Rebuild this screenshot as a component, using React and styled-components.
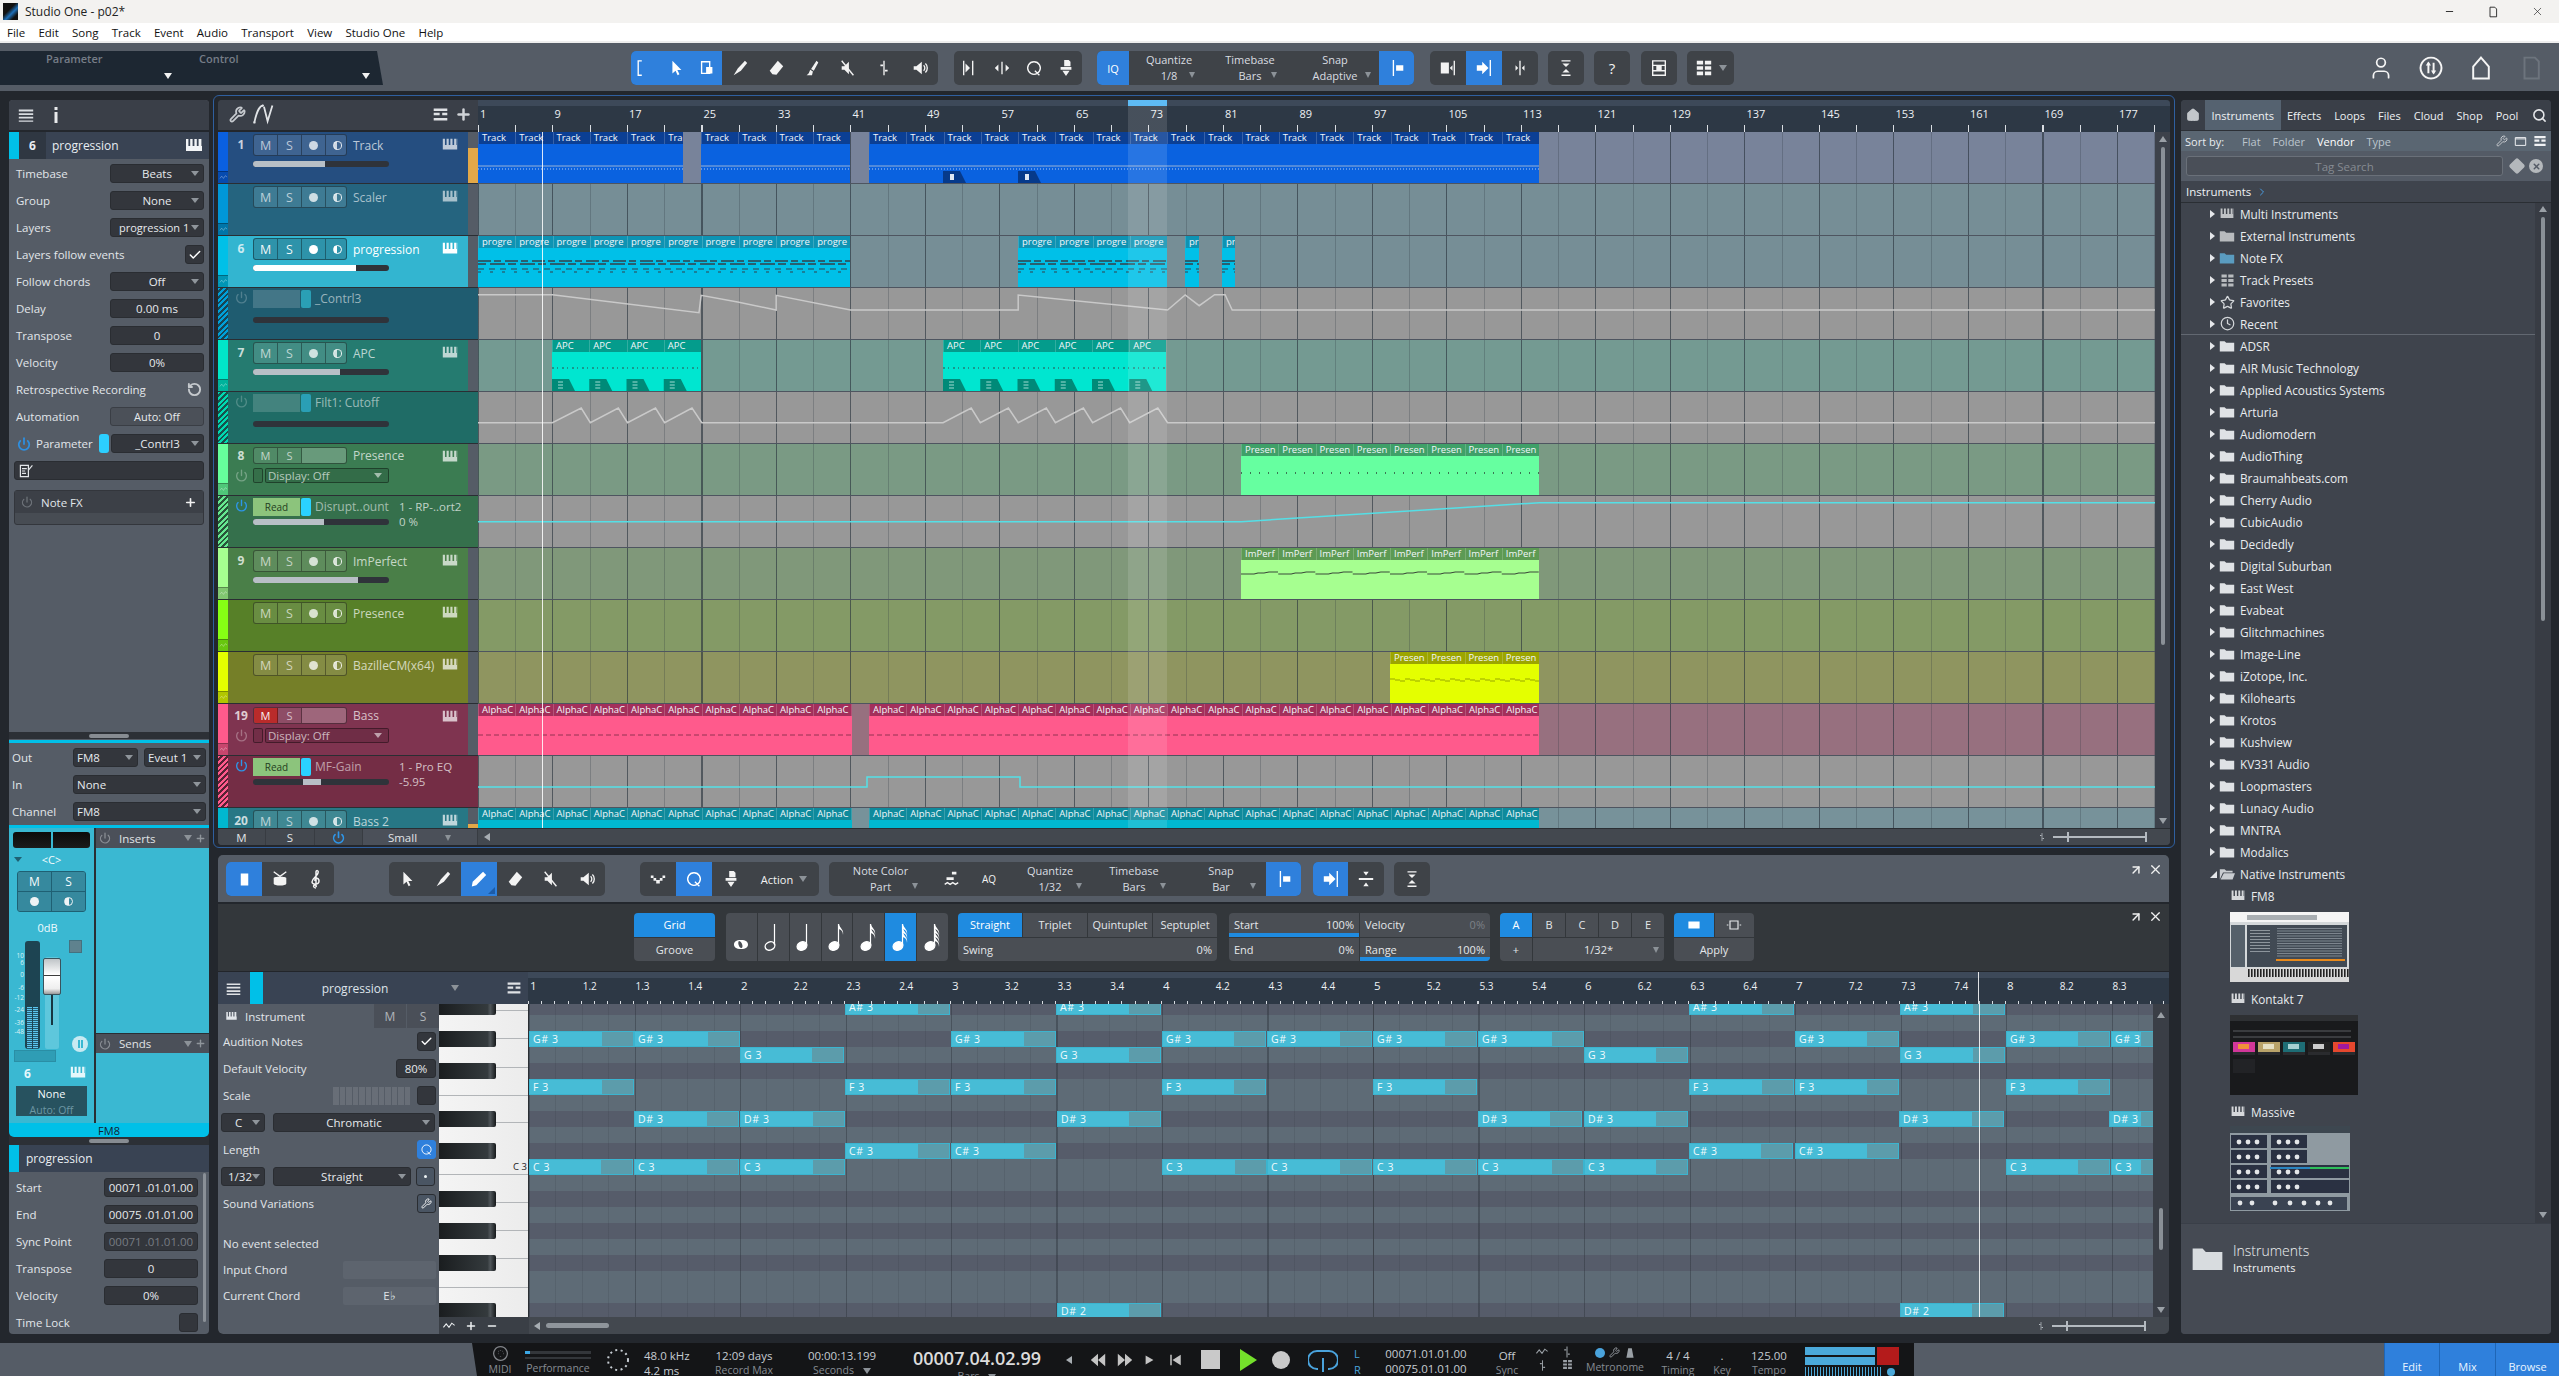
import React from 'react';
import styled, { createGlobalStyle } from 'styled-components';
import { Power, Search, House, Wrench, Check, Plus, X, Star, Clock, Minus, ChevronRight, ArrowUpRight, RotateCcw, User } from 'lucide-react';

const Global = createGlobalStyle`
  html, body { margin: 0; padding: 0; background: #23272d; overflow: hidden; }
  #root { width: 2559px; height: 1376px; }
  * { box-sizing: border-box; }
  body { font-family: "Open Sans", "Liberation Sans", sans-serif; font-size: 11.5px; color: #dfe3e8; }
`;

/* ---------- icons ---------- */
const P = {
  arrow: { d: 'M6 2v14l3.5-3 2.3 5 2-1-2.3-4.8H16z' },
  pencil: { d: 'M14.5 2l3.5 3.5L7 17l-5 1.2L3 13z' },
  knife: { d: 'M15.5 2l2.5 2.5-7 8.5-8 5 4.5-7.5z' },
  eraser: { d: 'M12 2l6 6-7.5 9.5-4.5-.5L3 13z' },
  paint: { d: 'M15 2l2 2-5 9-3-2z M8 12l3 2-1 4H4c2-1 3-3 4-6z' },
  mute: { d: 'M3 8h3l5-5v14l-5-5H3z', l: 'M3 2l13 16' },
  split: { d: 'M6 6h3v2H6z M11 12h3v2h-3z', l: 'M10 2v16' },
  speaker: { d: 'M3 8h3l6-5v14l-6-5H3z', l: 'M14 7a4 4 0 0 1 0 6 M16 5a7 7 0 0 1 0 10' },
  bracket: { l: 'M12 2H8v16h4' },
  range: { d: 'M9 9h7v7H9z', l: 'M4 3h9v13H4z' },
  stretch: { d: 'M5 5l5 5-5 5z', l: 'M13 2v16 M3 2v16' },
  lr: { d: 'M2 10l4-4v8z M18 10l-4-4v8z', l: 'M10 3v14' },
  q: { l: 'M10 3a7 7 0 1 0 .01 0 M11 13l5 5' },
  press: { d: 'M8 1h5l2 2v5H8z M4 9h12v3H4z M6 13h8l-4 6z' },
  snapflag: { d: 'M9 7h8v6H9z', l: 'M6 1v18' },
  filmL: { d: 'M2 4h9v12H2z M15 7l-3 3 3 3z', l: 'M17 2v16' },
  arrowR: { d: 'M2 7h6V3l7 7-7 7v-4H2z', l: 'M17 1v18' },
  splitV: { d: 'M8 10l-3-3v6z M12 10l3-3v6z', l: 'M10 2v16' },
  expand: { d: 'M6 5h8l-4 4z M6 15h8l-4-4z', l: 'M5 2h10 M5 18h10' },
  film: { d: 'M7 7h6v6H7z', l: 'M3 2h14v16H3z M3 7h14 M3 13h14' },
  windowI: { l: 'M2 4h16v12H2z M2 6h16' },
  grid: { d: 'M2 2h7v4H2z M11 2h7v4h-7z M2 8h7v4H2z M11 8h7v4h-7z M2 14h7v4H2z M11 14h7v4h-7z' },
  list: { d: 'M2 4h16v2H2z M2 8h16v2H2z M2 12h16v2H2z M2 16h16v1.5H2z' },
  rows: { d: 'M2 3h16v3H2z M2 8h7v3H2z M12 8h6v3h-6z M2 14h16v3H2z' },
  keys: { d: 'M2 3h2.4v7h1.8V3h2.4v7h1.8V3h2.4v7h1.8V3H17v7h.6V3H18v12H2z' },
  curve: { l: 'M2 17C4 7 7 3 9 3M10 4l3 12 4-13', d: 'M1 17a1 1 0 1 0 2 0a1 1 0 1 0-2 0 M8 3a1 1 0 1 0 2 0a1 1 0 1 0-2 0' },
  drum: { d: 'M3 9c0-2 14-2 14 0v6c0 3-14 3-14 0z', l: 'M3 2l7 5 7-5' },
  treble: { l: 'M10 19c-3 0-3-3-1-3s1 2 1 2V3c0-2 3-2 2 1-1 4-6 5-6 9 0 3 7 3 7-1s-5-3-4 0' },
  ruler: { d: 'M5 2h10v16H5z' },
  skew: { d: 'M2 6h3v3H2z M8 11h4v4H8z M15 6h3v3h-3z M5 9h3v3H5z M12 9h3v3h-3z' },
  bars2: { d: 'M11 2h5v3h-5z M5 8h8v3H5z', l: 'M3 16l3-2 3 2 3-2 3 2 3-2' },
  sizeE: { d: 'M2 5h16v10H2z', l: '' },
  size2: { l: 'M5 5h10v10H5z M3 10H1 M17 10h2' },
  divide: { d: 'M7 2h6l-3 4z M2 9h16v2H2z M7 18h6l-3-4z' },
  circArrows: { l: 'M10 2a8 8 0 1 0 .01 0 M8 6v8 M12 14V6', d: 'M8 5l-2 3h4z M12 15l-2-3h4z' },
  homeO: { l: 'M10 2l6 7v9H4V9z' },
  doc: { l: 'M5 2h8l3 3v13H5z' },
  edit: { l: 'M3 3h10v14H3z M5 7h6 M5 10h4 M5 13h5 M13 9l5-6' },
  folder: { d: 'M1 4h6l2 2h10v11H1z' },
  folderO: { d: 'M1 4h6l2 2h8v2H5l-4 9z M6 9h14l-3 8H2z' },
  midi: { l: 'M10 2a8 8 0 1 0 .01 0 M7 10h.5 M13 10h.5 M10 6v.5 M10 13v.5 M7.5 7.5h.5 M12.5 7.5h.5' },
  metro: { d: 'M7 2h6l3 16H4z' },
  wave: { l: 'M2 12l4-5 4 5 4-6 4 3' },
};
const Svg = styled.svg`
  display: block; flex: none; color: ${p => p.$c || 'currentColor'};
`;
const Ico = ({ n, s = 18, c }) => {
  const i = P[n];
  return (
    <Svg viewBox="0 0 20 20" width={s} height={s} $c={c}>
      {i.d && <path d={i.d} fill="currentColor" />}
      {i.l && <path d={i.l} fill="none" stroke="currentColor" strokeWidth="1.5" />}
    </Svg>
  );
};
const NoteGlyph = ({ kind }) => {
  const filled = kind > 1;
  const flags = Math.max(0, kind - 2);
  if (kind === 0) return <Svg viewBox="0 0 20 34" width="20" height="34"><path fillRule="evenodd" d="M10 20c5 0 7 2 7 4.5S15 29 10 29s-7-2-7-4.5S5 20 10 20zM8 21c-1.500 1-.5 6 2 7s2-6-2-7z" fill="currentColor" /></Svg>;
  return (
    <Svg viewBox="0 0 20 34" width="20" height="34">
      <ellipse cx="7" cy="26" rx="5" ry="4" fill={filled ? 'currentColor' : 'none'} stroke="currentColor" strokeWidth="1.4" transform="rotate(-25 7 26)" />
      <path d="M11.500 25V4" stroke="currentColor" strokeWidth="1.2" />
      {Array.from({ length: flags }).map((_, i) => (
        <path key={i} d={`M12 ${4 + i * 4}c1 5 5 5 4 11c0-4-2-5-4-6z`} fill="currentColor" />
      ))}
    </Svg>
  );
};

/* ---------- page frame ---------- */
const Page = styled.div`
  width: 2559px; height: 1376px; display: flex; flex-direction: column; overflow: hidden; background: #23272d;
`;
const TitleBar = styled.div`
  height: 23px; background: #f3f2f0; color: #222; display: flex; align-items: center; padding-left: 3px; font-size: 12px; flex: none;
`;
const AppIcon = styled.div`
  width: 15px; height: 17px; margin-right: 7px; background: linear-gradient(135deg,#111 40%,#1d6fb8 60%,#111 80%);
`;
const WinCtl = styled.div`
  width: 44px; display: flex; justify-content: center; color: #222;
`;
const MenuBar = styled.div`
  height: 20px; flex: none; background: #fff; border-bottom: 2px solid #eeeeee; color: #111; display: flex; align-items: center; padding-left: 7px; gap: 13.2px; font-size: 11.5px;
`;
const TopBar = styled.div`
  height: 48px; flex: none; background: #555c66; display: flex; align-items: flex-start; padding-top: 8px;
`;
const ParamPanel = styled.div`
  width: 383px; height: 34px; background: #1d2732; flex: none; clip-path: polygon(0 0, 377px 0, 383px 100%, 0 100%); display: flex; position: relative; color: #767d87; font-weight: 600;
`;
const ParamCol = styled.div`
  width: ${p => p.$w}px; display: flex; flex-direction: column; align-items: flex-start; padding: 1px 0 0 ${p => p.$pl}px; line-height: 14px; font-size: 11px;
`;
const WhiteTri = styled.i`
  width: 0; height: 0; border: 4px solid transparent; border-top: 6px solid #f2f2f2; border-bottom: 0; margin-top: 7px; align-self: flex-end;
`;
const Group = styled.div`
  display: flex; height: 34px; background: #3f4348; border-radius: 5px; margin-left: ${p => p.$ml || 0}px; overflow: hidden; flex: none; color: #f3f3f3;
`;
const Tool = styled.div`
  width: ${p => p.$w || 36}px; display: flex; align-items: center; justify-content: center; background: ${p => (p.$on ? '#2f80dc' : 'transparent')}; color: ${p => p.$on ? '#fff' : 'inherit'}; font-size: ${p => p.$fs || 12}px; flex: none; position: relative; padding-right: ${p => p.$pr || 0}px;
`;
const Corner = styled.i`
  position: absolute; right: 2px; bottom: 2px; width: 0; height: 0; border-left: 7px solid transparent; border-bottom: 7px solid #1d5ca8;
`;
const LabelBlock = styled.div`
  width: ${p => p.$w}px; flex: none; display: flex; flex-direction: column; align-items: center; line-height: 16px; font-size: 11px; padding-top: 1px; color: #d9dde1; position: relative;
`;
const SmallDrop = styled.i`
  position: absolute; right: ${p => p.$r ?? 8}px; bottom: ${p => p.$b ?? 7}px; width: 0; height: 0; border: 3.5px solid transparent; border-top: 6px solid #8c9298; border-bottom: 0;
`;
const DropGray = styled.i`
  width: 0; height: 0; border: 4px solid transparent; border-top: 6px solid #8c9298; border-bottom: 0; margin-left: 6px; flex: none;
`;
const RightIcons = styled.div`
  display: flex; margin-left: 622px; color: #f5f5f5; height: 34px; align-items: center;
`;
const RightIcon = styled.div`
  width: 50px; display: flex; justify-content: center; color: ${p => p.$dim ? '#6d747d' : '#f5f5f5'};
`;
const Main = styled.div`
  height: 1252px; flex: none; display: flex; padding: 4px 0 0 9px; background: #23272d;
`;
const LeftCol = styled.div`
  width: 200px; height: 1234px; margin-top: 5px; flex: none; display: flex; flex-direction: column; background: #555c66; border-radius: 4px; overflow: hidden;
`;
const CenterCol = styled.div`
  width: 1962px; margin-left: 4px; flex: none; display: flex; flex-direction: column;
`;
const RightCol = styled.div`
  width: 370px; height: 1234px; margin: 5px 0 0 6px; flex: none; display: flex; flex-direction: column; background: #3f444d; border-radius: 4px; overflow: hidden;
`;

/* ---------- inspector ---------- */
const InspHead = styled.div`
  height: 32px; background: #3a3f48; border-bottom: 2px solid #23272d; display: flex; align-items: center; padding-left: 8px; gap: 18px; color: #d8dce0; flex: none;
`;
const NameBar = styled.div`
  height: ${p => p.$h || 27}px; flex: none; display: flex; align-items: center; background: #394353; font-size: 12px; color: #e8edf2; position: relative; margin-bottom: ${p => p.$mb || 0}px;
`;
const CyanChip = styled.div`
  width: ${p => p.$w || 10}px; align-self: stretch; background: #00c0e8; flex: none; margin-left: ${p => p.$ml || 0}px;
`;
const NumChip = styled.div`
  width: 27px; align-self: stretch; background: #2f3742; display: flex; align-items: center; justify-content: center; font-weight: 700; flex: none;
`;
const IRow = styled.div`
  height: ${p => p.$h || 27}px; display: flex; align-items: center; padding: ${p => p.$pad || '0 5px 0 7px'}; flex: none; gap: ${p => p.$gap || 0}px; margin-top: ${p => p.$mt || 0}px;
`;
const ILabel = styled.div`
  flex: 1; white-space: nowrap; color: #e2e6ea;
`;
const Field = styled.div`
  width: ${p => p.$w || 94}px; height: 19px; flex: none; background: ${p => p.$bg || '#33363c'}; border: 1px solid ${p => p.$bd || '#2a2d32'}; border-radius: 3px; display: flex; align-items: center; justify-content: ${p => p.$left ? 'flex-start' : 'center'}; padding: ${p => p.$left ? '0 0 0 3px' : '0'}; color: ${p => p.$c || '#e6e9ec'}; position: relative; font-size: ${p => p.$fs || 11.5}px; white-space: nowrap;
  ${p => p.$drop && `&::after{content:"";position:absolute;right:${p.$r ?? 4}px;top:6px;border:4px solid transparent;border-top:5px solid #8f959b;border-bottom:0;}`}
`;
const CheckBox = styled(Field)`
  width: 19px; color: #fff;
`;
const Swatch = styled.div`
  width: 10px; height: 19px; background: #2ccfff; border-radius: 3px; margin-right: 2px; flex: none;
`;
const PowerWrap = styled.div`
  color: ${p => p.$c || '#2e8fe0'}; display: flex; flex: none; margin-right: ${p => p.$mr || 5}px; margin-left: ${p => p.$ml || 0}px;
`;
const NoteFX = styled.div`
  margin: 6px 5px 0 5px; height: 35px; background: #474c53; border: 1px solid #33363c; border-radius: 3px; display: flex; flex-direction: column; flex: none;
`;
const NoteFXHead = styled.div`
  height: 22px; background: #3c4047; display: flex; align-items: center; padding: 0 6px; gap: 3px; color: #e2e6ea;
`;
const Grow = styled.div`
  flex: 1;
`;
const Handle = styled.div`
  height: ${p => p.$h || 7}px; background: #2c3036; display: flex; justify-content: center; align-items: center; flex: none;
  &::after{content:"";width:40px;height:4px;border-radius:2px;background:#878c92;}
`;
const CyanLine = styled.div`
  height: 3px; background: #00c0e8; flex: none; margin-top: ${p => p.$mt || 0}px;
`;
const Strip = styled.div`
  height: 309px; display: flex; flex-wrap: wrap; background: #2a2e33; flex: none; align-content: flex-start;
`;
const MixCol = styled.div`
  width: 85px; height: 295px; background: #3ab8d2; padding: 4px 4px 0 4px; display: flex; flex-direction: column; color: #f4fbfd; flex: none;
`;
const PanBox = styled.div`
  height: 16px; background: linear-gradient(#0b0b0b,#1b1b1b); border-radius: 3px; display: flex; justify-content: center;
  &::after{content:"";width:2px;background:#3ab8d2;}
`;
const PanLabel = styled.div`
  height: 23px; display: flex; align-items: center; justify-content: center; position: relative; font-size: 11px;
`;
const MiniTri = styled.i`
  position: absolute; left: 1px; top: 9px; border: 4px solid transparent; border-top: 5px solid #1f6073; border-bottom: 0;
`;
const MSGrid = styled.div`
  width: 69px; height: 41px; margin-left: 4px; background: #36899e; border: 1px solid #1f6073; border-radius: 3px; display: grid; grid-template-columns: 1fr 1fr; grid-template-rows: 1fr 1fr; gap: 1px; overflow: hidden;
`;
const MSCell = styled.div`
  background: #36899e; outline: 1px solid #1f6073; display: flex; align-items: center; justify-content: center; font-size: 12px;
`;
const Dot = styled.i`
  width: ${p => p.$s || 9}px; height: ${p => p.$s || 9}px; border-radius: 50%; background: ${p => p.$c || '#eef3f5'}; display: block;
`;
const HalfDot = styled.i`
  width: ${p => p.$s || 9}px; height: ${p => p.$s || 9}px; border-radius: 50%; display: block; background: linear-gradient(90deg, ${p => p.$c || '#eef3f5'} 50%, transparent 50%); border: 1px solid ${p => p.$c || '#eef3f5'};
`;
const DbLabel = styled.div`
  text-align: center; margin: 8px 0 0 -8px; height: 16px; font-size: 11px; line-height: 16px; color: #f0fbff;
`;
const FaderArea = styled.div`
  height: 108px; margin-top: 5px; display: flex; position: relative;
`;
const Scale = styled.div`
  width: 12px; color: #dcf2f6; font-size: 6.5px; position: relative; flex: none;
`;
const ScaleTick = styled.span`
  position: absolute; right: 1px; top: ${p => p.$y}px;
`;
const Meter = styled.div`
  width: 15px; background: #1d4452; border-radius: 3px; flex: none; display: flex; gap: 1px; padding: 0 2px; align-items: flex-end;
`;
const MeterBar = styled.div`
  flex: 1; height: 42px; background: repeating-linear-gradient(#5cc6ef 0 1px, #245b72 1px 2px);
`;
const FaderTrack = styled.div`
  width: 14px; margin-left: 5px; background: #5ec7dc; border-radius: 2px; position: relative; flex: none; margin-top: 16px;
`;
const FaderLine = styled.div`
  position: absolute; left: 6px; width: 2px; top: 30px; height: 38px; background: #173642;
`;
const FaderCap = styled.div`
  position: absolute; left: 30px; top: 17px; width: 18px; height: 37px; border-radius: 2px; background: linear-gradient(#bfc4c7,#fff 45%,#333 47%,#fff 50%,#eee 85%,#999); border: 1px solid #39535d;
`;
const SquareBtn = styled.div`
  position: absolute; left: 56px; top: -1px; width: 13px; height: 13px; background: #5f828e; border: 1px solid #45717f; 
`;
const RoundBtn = styled.div`
  position: absolute; right: 2px; top: 95px; width: 16px; height: 16px; border-radius: 50%; background: #c8eaf2; display: flex; align-items: center; justify-content: center; gap: 1px;
  &::before,&::after{content:"";width:2px;height:8px;background:#3ab8d2;}
`;
const FlatBox = styled.div`
  width: 42px; height: 12px; background: #2f9db5; border: 1px solid #2a8ea5; margin: 1px 0 0 1px; 
`;
const SRow = styled.div`
  display: flex; justify-content: space-between; align-items: center; padding: 0 3px 0 11px; height: 22px; font-weight: 700; font-size: 12px; color: #e5f7fb;
`;
const NoneBox = styled.div`
  margin: 2px 3px 0 3px; height: 30px; background: #27525f; display: flex; flex-direction: column; align-items: center; font-size: 11px; line-height: 16px;
`;
const AutoDim = styled.div`
  font-size: 10.5px; color: #6d97a4;
`;
const FxCol = styled.div`
  width: 113px; margin-left: 2px; height: 295px; display: flex; flex-direction: column; background: #3ab8d2; flex: none;
`;
const FxHead = styled.div`
  height: 20px; background: #4b5059; display: flex; align-items: center; padding: 0 3px; gap: 3px; color: #e0e3e6; flex: none; border-top: ${p => p.$t ? '1px solid #2a2e33' : '0'};
`;
const FxBody = styled.div`
  height: ${p => p.$h}px; flex: none;
`;
const FmBar = styled.div`
  width: 200px; height: 14px; background: #00c0e8; border-radius: 0 0 5px 5px; color: #123; display: flex; align-items: center; justify-content: center; font-size: 11px;
`;
const ScrollThin = styled.div`
  position: absolute; right: 3px; top: 1px; bottom: 12px; width: 3px; background: #8a9097; border-radius: 2px;
`;
const EventPanel = styled.div`
  position: relative; height: 162px; flex: none; display: flex; flex-direction: column; padding-top: 2px;
`;

/* ---------- arrange ---------- */
const Arrange = styled.div`
  height: 753px; border: 1px solid #2f5f9f; border-radius: 6px; padding: 4px 4px 2px 4px; flex: none;
`;
const ArrInner = styled.div`
  height: 745px; display: flex; flex-direction: column; background: #3a3f48; border-radius: 4px; overflow: hidden;
`;
const ArrHead = styled.div`
  height: 32px; display: flex; flex: none;
`;
const ListHead = styled.div`
  width: 260px; flex: none; background: #3a3f48; display: flex; align-items: center; padding: 0 6px 2px 11px; gap: 6px; color: #c6cacf; border-bottom: 2px solid #23272d;
`;
const RulerWrap = styled.div`
  flex: 1; display: flex; flex-direction: column; overflow: hidden; position: relative; background: #2d3845;
`;
const RulerTop = styled.div`
  height: ${p => p.$h || 6}px; background: #3d4959; flex: none;
`;
const RulerRow = styled.div`
  flex: 1; display: flex; background: repeating-linear-gradient(90deg, #d9dde2 0 1px, transparent 1px ${p => p.$step}px) bottom left / 100% ${p => p.$th}px no-repeat;
`;
const RCell = styled.div`
  width: ${p => p.$w}px; flex: none; padding: 1px 0 0 2px; font-size: ${p => p.$fs || 11}px; color: #eef1f4; line-height: 14px; position: relative;
`;
const LoopMark = styled.div`
  position: absolute; left: 650px; top: 0; width: 39px; height: 32px; background: linear-gradient(#5ebbf5 0 6px, rgba(255,255,255,.12) 6px);
`;
const ArrBody = styled.div`
  height: 696px; display: flex; flex: none; overflow: hidden;
`;
const TrackList = styled.div`
  width: 260px; flex: none; display: flex; flex-direction: column; background: #2c3036;
`;
const TrackRow = styled.div`
  height: 52px; flex: none; display: flex; background: ${p => p.$bg}; border-bottom: 1px solid #2a2e33; overflow: hidden;
`;
const TStrip = styled.div`
  width: 10px; flex: none; display: flex; flex-direction: column; background: ${p => p.$hatch ? `repeating-linear-gradient(135deg, ${p.$c} 0 2px, rgba(0,0,0,.25) 2px 4px)` : p.$c}; margin-right: 1px;
`;
const TStripSub = styled.div`
  margin-top: auto; height: 12px; background: rgba(0,0,0,.22); border-top: 1px solid rgba(0,0,0,.3); color: rgba(255,255,255,.45); display: flex; align-items: center; justify-content: center;
`;
const TBody = styled.div`
  flex: 1; display: flex; flex-direction: column; min-width: 0;
`;
const TLine = styled.div`
  display: flex; align-items: flex-start; height: ${p => p.$h || 26}px; padding-top: 2px; position: relative; flex: none;
`;
const TNum = styled.div`
  width: 24px; flex: none; text-align: center; font-weight: 700; font-size: 12px; color: rgba(255,255,255,.75); line-height: ${p => p.$lh || 22}px;
`;
const TBtns = styled.div`
  width: 94px; height: ${p => p.$h || 22}px; flex: none; display: flex; border: 1px solid rgba(0,0,0,.4); border-radius: 3px; overflow: hidden; background: ${p => p.$bg}; margin-top: ${p => p.$mt || 0}px;
`;
const TBtn = styled.div`
  width: 24px; flex: none; border-right: 1px solid rgba(0,0,0,.35); display: flex; align-items: center; justify-content: center; font-size: ${p => p.$fs || 12.5}px; color: rgba(255,255,255,${p => p.$a || .65}); background: ${p => p.$c || 'transparent'};
`;
const TBlank = styled.div`
  flex: 1; background: rgba(255,255,255,.14);
`;
const TName = styled.div`
  margin-left: 6px; font-size: 12px; line-height: ${p => p.$lh || 24}px; color: rgba(255,255,255,${p => p.$a}); white-space: nowrap; width: 88px; overflow: visible; flex: none;
`;
const TKeys = styled.div`
  flex: none; margin-top: 2px; color: rgba(255,255,255,${p => p.$a});
`;
const TSlider = styled.div`
  margin-left: ${p => p.$ml ?? 24}px; width: 136px; height: 6px; background: #2f333a; border-radius: 3px; overflow: hidden; flex: none; margin-top: ${p => p.$mt ?? 3}px; position: relative;
`;
const TFill = styled.div`
  height: 100%; background: ${p => p.$c || '#b8bfc6'}; margin-left: ${p => p.$l || 0}%;
`;
const TSliver = styled.div`
  width: 10px; flex: none; background: #555c66; display: flex; flex-direction: column; justify-content: flex-end;
`;
const Orange = styled.div`
  height: 35px; background: #e3a848;
`;
const AutoVal = styled.div`
  width: 47px; height: 18px; flex: none; background: ${p => p.$read ? '#8cc47c' : 'rgba(255,255,255,.16)'}; color: #24401f; font-size: 10px; display: flex; align-items: center; justify-content: center;
`;
const AutoSw = styled.div`
  width: 10px; height: 18px; margin-left: 1px; background: ${p => p.$dim ? '#2a9fb5' : '#2ad2ff'}; border-radius: 2px; flex: none;
`;
const AutoName = styled.div`
  margin-left: 4px; font-size: 12px; color: rgba(255,255,255,.55); line-height: 18px; width: 84px; flex: none; white-space: nowrap;
`;
const AutoSide = styled.div`
  font-size: 11.5px; color: rgba(255,255,255,.7); line-height: 18px; white-space: nowrap; margin-left: ${p => p.$ml || 0}px;
`;
const SubLine = styled.div`
  display: flex; align-items: center; height: 18px; position: relative; flex: none;
`;
const DispBlank = styled.div`
  width: 10px; height: 15px; border: 1px solid rgba(0,0,0,.4); border-radius: 2px; background: rgba(0,0,0,.1); flex: none;
`;
const DispDrop = styled.div`
  width: 124px; height: 15px; margin-left: 2px; border: 1px solid rgba(0,0,0,.4); border-radius: 2px; background: rgba(0,0,0,.12); color: rgba(255,255,255,.65); display: flex; align-items: center; padding-left: 2px; font-size: 11.5px; position: relative;
  &::after{content:"";position:absolute;right:6px;top:4px;border:4px solid transparent;border-top:5px solid rgba(255,255,255,.55);border-bottom:0;}
`;
const PowerCol = styled.div`
  width: 24px; flex: none; display: flex; justify-content: center; color: ${p => p.$c}; padding-top: ${p => p.$pt || 0}px;
`;
const Lanes = styled.div`
  flex: 1; position: relative; display: flex; flex-direction: column; overflow: hidden;
`;
const Lane = styled.div`
  height: 52px; flex: none; position: relative; border-bottom: 1px solid #4e5560; background-color: ${p => p.$bg};
  background-image: repeating-linear-gradient(90deg, rgba(40,50,60,.5) 0 1px, transparent 1px 74.5px), repeating-linear-gradient(90deg, rgba(40,50,60,.25) 0 1px, transparent 1px 37.25px);
`;
const ClipBox = styled.div`
  position: absolute; top: 0; height: 51px; background: ${p => p.$body}; overflow: hidden;
`;
const ClipHead = styled.div`
  height: 12px; display: flex; background: ${p => p.$c};
`;
const ClipSeg = styled.div`
  width: 37.25px; flex: none; font-size: 9.5px; line-height: 12px; padding-left: 3px; color: #f2f6fa; overflow: hidden; white-space: nowrap; border-left: 1px solid rgba(255,255,255,.18);
`;
const ClipArt = styled.svg`
  position: absolute; left: 0; top: 0; display: block;
`;
const PlayBand = styled.div`
  position: absolute; left: 650px; top: 0; width: 39px; bottom: 0; background: rgba(255,255,255,.12); pointer-events: none;
`;
const Cursor = styled.div`
  position: absolute; left: ${p => p.$x}px; top: ${p => p.$t || 0}px; bottom: 0; width: 1px; background: rgba(255,255,255,.85); pointer-events: none;
`;
const VScroll = styled.div`
  width: 15px; flex: none; background: #3d424b; display: flex; flex-direction: column; align-items: center; padding-top: 4px; position: relative;
`;
const UpTri = styled.i`
  border: 4px solid transparent; border-bottom: 6px solid #9aa0a6; border-top: 0; flex: none;
`;
const DownTri = styled.i`
  border: 4px solid transparent; border-top: 6px solid #9aa0a6; border-bottom: 0; flex: none; margin-top: auto; margin-bottom: ${p => p.$mb || 4}px;
`;
const VThumb = styled.div`
  width: 4px; height: ${p => p.$h}px; background: #8a9097; border-radius: 2px; margin-top: ${p => p.$mt || 5}px; flex: none;
`;
const ArrFoot = styled.div`
  height: 17px; flex: none; display: flex; align-items: center; background: #43484f; color: #e0e3e6; border-top: 1px solid #2a2e33;
`;
const FootCell = styled.div`
  width: ${p => p.$w}px; flex: none; align-self: stretch; display: flex; align-items: center; justify-content: center; border-right: 1px solid #383c42; color: ${p => p.$c || 'inherit'}; background: ${p => p.$bg || 'transparent'}; position: relative; padding-right: ${p => p.$pr || 0}px;
`;
const LeftTri = styled.i`
  border: 4px solid transparent; border-right: 6px solid #a7adb2; border-left: 0; flex: none; margin-left: ${p => p.$ml || 0}px;
`;
const HThumb = styled.div`
  width: ${p => p.$w}px; height: 5px; margin-left: ${p => p.$ml}px; background: #8f959b; border-radius: 3px; flex: none;
`;
const Zoomer = styled.div`
  display: flex; align-items: center; margin-left: auto; margin-right: 23px; flex: none; gap: 6px; color: #b4bac0;
`;
const ZoomBar = styled.div`
  width: 94px; height: 2px; background: #b4bac0; position: relative;
  &::before{content:"";position:absolute;left:14px;top:-4px;width:2px;height:10px;background:#b4bac0;}
  &::after{content:"";position:absolute;right:0;top:-4px;width:2px;height:10px;background:#b4bac0;}
`;

/* ---------- editor ---------- */
const Editor = styled.div`
  margin: 7px 6px 0 5px; height: 479px; display: flex; flex-direction: column; border-radius: 5px; overflow: hidden; background: #33373b; flex: none;
`;
const EdTool = styled.div`
  height: 49px; flex: none; background: #555c66; border-bottom: 2px solid #23272d; display: flex; padding: 7px 0 0 8px; position: relative;
`;
const WinBtns = styled.div`
  position: absolute; right: 6px; top: ${p => p.$t}px; display: flex; gap: 5px; color: #f1f1f1; align-items: center;
`;
const EdRow2 = styled.div`
  height: 68px; flex: none; background: #33373b; border-bottom: 1px solid #22252a; display: flex; padding: 9px 0 0 416px; position: relative; color: #e4e7ea;
`;
const Seg = styled.div`
  width: ${p => p.$w}px; margin-left: ${p => p.$ml || 0}px; height: 48px; flex: none; display: grid; grid-template-columns: ${p => p.$cols}; grid-template-rows: 1fr 1fr; gap: 1px; border-radius: 4px; overflow: hidden; background: #33373b;
`;
const SegCell = styled.div`
  background: ${p => p.$on ? '#1f8be0' : '#4a4e54'}; color: ${p => p.$on ? '#fff' : '#e4e7ea'}; display: flex; align-items: center; justify-content: ${p => p.$sb ? 'space-between' : 'center'}; padding: ${p => p.$sb ? '0 5px' : 0}; grid-column: ${p => p.$span ? `span ${p.$span}` : 'auto'}; font-size: 11px; position: relative; white-space: nowrap;
  ${p => p.$under && 'box-shadow: inset 0 -4px 0 #1f8be0;'}
`;
const PctDim = styled.span`
  color: ${p => p.$dim ? '#7c8187' : '#e4e7ea'};
`;
const NoteSeg = styled.div`
  width: 222px; margin-left: 11px; height: 48px; flex: none; display: flex; gap: 1px; border-radius: 4px; overflow: hidden;
`;
const NoteBtn = styled.div`
  flex: 1; background: ${p => p.$on ? '#1f8be0' : '#4a4e54'}; display: flex; align-items: center; justify-content: center; color: #fff;
`;
const EdHeadRow = styled.div`
  height: 32px; flex: none; display: flex;
`;
const EdHeadLeft = styled.div`
  width: 310px; flex: none; background: #394353; display: flex; align-items: center; color: #dfe4ea; position: relative; padding-left: 7px;
`;
const EdName = styled.div`
  width: 180px; text-align: center; font-size: 12px; margin-left: 2px;
`;
const EdBody = styled.div`
  height: 330px; display: flex; flex: none;
`;
const EdLeft = styled.div`
  width: 221px; flex: none; background: #555c66; display: flex; flex-direction: column; border-radius: 0 0 0 5px;
`;
const MSBox = styled.div`
  display: flex; gap: 1px; margin-right: -5px; align-self: stretch;
`;
const MSBoxCell = styled.div`
  width: 32px; background: #4a4f58; display: flex; align-items: center; justify-content: center; font-size: 12px; color: #b0b5ba;
`;
const ScaleArt = styled.div`
  width: 78px; height: 18px; margin-right: 6px; flex: none; background: repeating-linear-gradient(90deg,#6a7079 0 6px,transparent 6px 7px, #6a7079 7px 12px, #555c66 12px 13px); opacity: .9;
`;
const FlatField = styled.div`
  width: 93px; height: 18px; background: #5d646e; border-radius: 2px; flex: none; display: flex; align-items: center; justify-content: center; color: #dfe3e8;
`;
const EdRight = styled.div`
  flex: 1; display: flex; flex-direction: column; min-width: 0;
`;
const RollRow = styled.div`
  height: 313px; display: flex; flex: none;
`;
const Piano = styled.div`
  width: 90px; flex: none; position: relative; background: linear-gradient(90deg,#f4f4f4,#ececec); overflow: hidden; border-right: 1px solid #2a2e33;
`;
const BlackKey = styled.div`
  position: absolute; left: 0; width: 57px; height: 16px; background: linear-gradient(90deg,#1a1d1f,#343a3d 85%,#50565a 90%,#15181a); border-radius: 0 2px 2px 0;
`;
const KeyLine = styled.div`
  position: absolute; left: 0; right: 0; height: 1px; background: #b2b5b8;
`;
const C3Label = styled.div`
  position: absolute; right: 1px; top: 156px; color: #222; font-size: 9.5px;
`;
const Roll = styled.div`
  flex: 1; position: relative; overflow: hidden; display: flex; flex-direction: column; background: #5c6872;
`;
const RollTopShift = styled.div`
  margin-top: -5px; display: flex; flex-direction: column; flex: none;
`;
const RollRowBg = styled.div`
  height: 16px; flex: none; background: ${p => p.$b ? '#565c6a' : '#5e6b76'}; 
`;
const RollGrid = styled.div`
  position: absolute; inset: 0; background-image: repeating-linear-gradient(90deg, rgba(40,46,54,.3) 0 1px, transparent 1px 105.5px), repeating-linear-gradient(90deg, rgba(40,46,54,.14) 0 1px, transparent 1px 26.375px);
`;
const NoteBox = styled.div`
  position: absolute; height: 16px; background: linear-gradient(90deg,#47bcd6 0 70%,#5c9cab 70%); border: 1px solid #3bb4cf; color: #f2fbfd; font-size: 10.5px; line-height: 14px; padding-left: 3px; overflow: hidden; letter-spacing: .6px; white-space: nowrap;
`;
const BarLine = styled.div`
  position: absolute; left: 844px; top: 0; bottom: 0; width: 1px; background: #3e444c;
`;
const EdFoot = styled.div`
  height: 17px; flex: none; background: #43484f; display: flex; align-items: center; color: #eceff1;
`;
const FootIcons = styled.div`
  width: 90px; height: 100%; background: #3a3f46; display: flex; align-items: center; gap: 9px; padding-left: 3px; flex: none;
`;
const EdRulerTop = styled(RulerTop)``;
const EdVScroll = styled(VScroll)`
  width: 16px; padding-top: 8px; background: #3a3e46;
`;

/* ---------- browser ---------- */
const BrTabs = styled.div`
  height: 31px; flex: none; background: #3a3f48; display: flex; align-items: stretch; padding-left: 0; color: #eef1f3; border-bottom: 1px solid #2c3036; font-size: 11px;
`;
const BrHome = styled.div`
  width: 24px; display: flex; align-items: center; justify-content: center; color: #c3c7cb; flex: none;
`;
const BrTab = styled.div`
  padding: 0 6.5px; display: flex; align-items: center; background: ${p => p.$on ? '#556270' : 'transparent'}; flex: none;
`;
const BrSort = styled.div`
  height: 20px; flex: none; background: #5a6672; display: flex; align-items: center; padding: 0 4px; color: #e8ecef; font-size: 11px;
`;
const SortItem = styled.div`
  margin-left: ${p => p.$ml || 12}px; color: ${p => p.$on ? '#fff' : '#bcc5cd'}; flex: none;
`;
const SortIcons = styled.div`
  margin-left: auto; display: flex; gap: 6px; color: #f0f2f4; align-items: center;
`;
const BrTag = styled.div`
  height: 30px; flex: none; background: #545b66; display: flex; align-items: center; padding: 0 5px; gap: 6px;
`;
const TagInput = styled.div`
  width: 317px; height: 20px; background: #4a4f58; border: 1px solid #6a7079; border-radius: 3px; display: flex; align-items: center; justify-content: center; color: #868b92; flex: none;
`;
const TagIcon = styled.div`
  width: 14px; height: 14px; border-radius: 50%; background: #b4b8bc; flex: none; color: #545b66; display: flex; align-items: center; justify-content: center;
`;
const TagDiamond = styled.div`
  width: 12px; height: 12px; transform: rotate(45deg); background: #b4b8bc; flex: none; margin-left: 2px; border-radius: 2px;
`;
const BrCrumb = styled.div`
  height: 22px; flex: none; background: #3f444d; border-bottom: 1px solid #2a2e33; display: flex; align-items: center; padding-left: 5px; gap: 5px; color: #eef1f3;
`;
const BrListWrap = styled.div`
  height: 1020px; flex: none; display: flex; overflow: hidden;
`;
const BrList = styled.div`
  flex: 1; display: flex; flex-direction: column; min-width: 0; overflow: hidden;
`;
const BrRow = styled.div`
  height: 22px; flex: none; display: flex; align-items: center; padding-left: 29px; color: #e9ecef; font-size: 11.8px; white-space: nowrap;
  border-bottom: ${p => p.$sep ? '1px solid #626871' : '0'};
`;
const BrRow2 = styled.div`
  height: 22px; flex: none; display: flex; align-items: center; padding-left: 49px; gap: 5px; color: #e9ecef; font-size: 11.8px;
`;
const RTri = styled.i`
  width: 0; height: 0; border: 4px solid transparent; border-left: 5px solid #e5e7ea; border-right: 0; margin-right: 4px; flex: none;
`;
const DTri = styled.i`
  width: 0; height: 0; border-left: 7px solid transparent; border-bottom: 7px solid #e5e7ea; margin-right: 2px; flex: none;
`;
const IconSlot = styled.div`
  width: 16px; height: 16px; flex: none; margin-right: 5px; display: flex; align-items: center; justify-content: center; color: ${p => p.$c || '#d4d7da'};
`;
const Thumb = styled.svg`
  display: block; margin: ${p => p.$mt ?? 5}px 0 0 49px; flex: none;
`;
const BrFoot = styled.div`
  flex: 1; background: #454a53; display: flex; align-items: flex-start; padding: 18px 0 0 10px; gap: 9px; border-top: 1px solid #3a3f48; color: #f0f2f4;
`;
const FootTitle = styled.div`
  font-size: 14px; line-height: 18px; font-weight: 300;
`;
const FootSub = styled.div`
  font-size: 11px; line-height: 15px;
`;
const BrScroll = styled(VScroll)`
  width: 16px; background: #383c44; padding-top: 3px;
`;

/* ---------- bottom ---------- */
const Bottom = styled.div`
  height: 33px; flex: none; display: flex; background: #555c66; overflow: hidden; padding-left: 472px;
`;
const Transport = styled.div`
  width: 1442px; height: 33px; flex: none; background: #141517; clip-path: polygon(0 0, 100% 0, 100% 100%, 5px 100%); display: flex; color: #c6ccd2; font-size: 11.5px;
`;
const TC = styled.div`
  width: ${p => p.$w}px; margin-left: ${p => p.$ml || 0}px; flex: none; display: flex; flex-direction: column; align-items: ${p => p.$al || 'center'}; padding-top: ${p => p.$pt ?? 5}px; line-height: 15px; position: relative; white-space: nowrap;
`;
const TLabel = styled.div`
  color: ${p => p.$c || '#868c93'}; font-size: 10.5px; display: flex; align-items: center; gap: 3px;
`;
const BigTime = styled.div`
  font-size: 18px; font-weight: 600; line-height: 22px; color: #dcdcdc; margin-top: -3px;
`;
const PerfBar = styled.div`
  width: 66px; height: 5px; background: #33363a; margin-top: ${p => p.$mt || 0}px; position: relative;
  &::before{content:"";position:absolute;left:0;top:0;bottom:0;width:${p => p.$w || 0}px;background:#3ba7e5;}
`;
const Spinner = styled.svg`
  display: block; margin-top: 1px;
`;
const PlayCtl = styled.div`
  width: ${p => p.$w}px; margin-left: ${p => p.$ml || 0}px; flex: none; display: flex; align-items: center; justify-content: center; height: 33px; color: #c4c4c4;
`;
const StopSq = styled.div`
  width: 19px; height: 19px; background: #c9c9c9;
`;
const RecDot = styled.div`
  width: 18px; height: 18px; border-radius: 50%; background: #c9c9c9;
`;
const LR = styled.div`
  width: 12px; font-size: 11px; color: #4aa3dc; line-height: 16px; padding-top: 3px; flex: none; margin-left: ${p => p.$ml || 0}px;
`;
const LevelWrap = styled.div`
  width: 94px; margin-left: ${p => p.$ml || 0}px; flex: none; padding-top: 4px; display: flex; flex-direction: column; gap: 2px;
`;
const LevelTop = styled.div`
  display: flex; height: 18px;
`;
const LevelBars = styled.div`
  flex: 1; display: flex; flex-direction: column; gap: 2px;
`;
const LevelBar = styled.div`
  flex: 1; background: #4ba9da; margin-right: 2px;
`;
const LevelRed = styled.div`
  width: 22px; background: #b41b1b;
`;
const LevelBottom = styled.div`
  height: 9px; display: flex; gap: 4px; align-items: center; color: #4ba9da;
`;
const LevelHatch = styled.div`
  width: 78px; height: 9px; background: repeating-linear-gradient(90deg,#4ba9da 0 1px,transparent 1px 3px);
`;
const ViewBtn = styled.div`
  width: ${p => p.$w}px; margin-left: ${p => p.$ml || 0}px; flex: none; background: #2f80dc; color: #eaf4ff; display: flex; align-items: flex-end; justify-content: center; font-size: 11px; padding-bottom: 2px; border-left: 1px solid #1f66b6; 
`;

/* ---------- data ---------- */
const TRACKS = [
  { kind: 'inst', n: '1', name: 'Track', strip: '#0a60e0', bg: '#254e80', btn: '#3f6491', sl: 53, orange: 1, lane: '#78839a', a: .7 },
  { kind: 'inst', name: 'Scaler', strip: '#0097d8', bg: '#25647f', btn: '#3e7b94', lane: '#768e96', a: .6, noSl: 1 },
  { kind: 'inst', n: '6', name: 'progression', strip: '#00c0e8', bg: '#33b5d0', btn: '#2e93aa', sl: 76, slc: '#fff', lane: '#768e96', a: 1 },
  { kind: 'auto', name: '_Contrl3', strip: '#00a0d8', bg: '#1f5c70', lane: '#989898', sl: 0 },
  { kind: 'inst', n: '7', name: 'APC', strip: '#00e6c8', bg: '#257b70', btn: '#428d84', sl: 64, lane: '#749a92', a: .7 },
  { kind: 'auto', name: 'Filt1: Cutoff', strip: '#00d8b0', bg: '#1f6c66', lane: '#989898', sl: 0 },
  { kind: 'disp', n: '8', name: 'Presence', strip: '#66ff9c', bg: '#3b7c52', btn: '#508a66', lane: '#7a9a84', a: .7 },
  { kind: 'read', name: 'Disrupt..ount', strip: '#66e890', bg: '#35704c', lane: '#989898', sl: 52, side: '1 - RP-..ort2', side2: '0 %' },
  { kind: 'inst', n: '9', name: 'ImPerfect', strip: '#a6ff90', bg: '#4a7f48', btn: '#5e8c5c', sl: 77, lane: '#80987a', a: .7 },
  { kind: 'inst', name: 'Presence', strip: '#86ff14', bg: '#578028', btn: '#698d42', lane: '#849a66', a: .7, noSl: 1 },
  { kind: 'inst', name: 'BazilleCM(x64)', strip: '#e4ff00', bg: '#757f28', btn: '#848c44', lane: '#8f9560', a: .7, noSl: 1 },
  { kind: 'disp', n: '19', name: 'Bass', strip: '#ff5a8c', bg: '#7f3450', btn: '#8e4d66', lane: '#97707f', a: .7, mute: 1 },
  { kind: 'read', name: 'MF-Gain', strip: '#ff5a8c', bg: '#742d45', lane: '#989898', sl: 0, side: '1 - Pro EQ', side2: '-5.95', mid: 1 },
  { kind: 'inst', n: '20', name: 'Bass 2', strip: '#00b8d0', bg: '#277785', btn: '#3f8893', lane: '#77929a', a: .7, orangeTop: 1, noSl: 1 },
];

const span = (from, to) => ({ from, to });
const CLIPS = [
  { h: '#0b3f94', b: '#0a62e0', label: 'Track', art: 'track', parts: [span(0, 205), span(223, 372), span(391, 1061)] },
  null,
  { h: '#0e93b3', b: '#00c0e8', label: 'progre', art: 'prog', parts: [span(0, 372), span(540, 689), span(707, 721), span(744, 757)] },
  null,
  { h: '#049c8c', b: '#00e6d0', label: 'APC', art: 'apc', parts: [span(74, 223), span(465, 688)] },
  null,
  { h: '#3fa068', b: '#66ffa0', label: 'Presen', art: 'pres', parts: [span(763, 1061)] },
  null,
  { h: '#5d9a54', b: '#a6ff90', label: 'ImPerf', art: 'imp', parts: [span(763, 1061)] },
  null,
  { h: '#9ca500', b: '#e4ff00', label: 'Presen', art: 'baz', parts: [span(912, 1061)] },
  { h: '#a32f5b', b: '#ff5a8c', label: 'AlphaC', art: 'bass', parts: [span(0, 374), span(391, 1061)] },
  null,
  { h: '#0e8a9c', b: '#00b8d0', label: 'AlphaC', art: 'bass', parts: [span(0, 374), span(391, 1061)] },
];

const ClipGraphic = ({ art, w }) => {
  const tabs = [];
  if (art === 'apc') for (let x = 0; x < w - 4; x += 37.25) tabs.push(x);
  return (
    <ClipArt width={w} height={51}>
      {art === 'track' && <>
        <line x1="0" x2={w} y1="37" y2="37" stroke="#dfe8f5" strokeWidth=".8" strokeDasharray="1 2" />
        <line x1="0" x2={w} y1="34" y2="34" stroke="#b9c6d6" strokeWidth=".8" />
      </>}
      {art === 'prog' && <>
        <line x1="0" x2={w} y1="25" y2="25" stroke="#35404a" strokeWidth="1.5" strokeDasharray="13 3 7 4" />
        <line x1="0" x2={w} y1="28" y2="28" stroke="#35404a" strokeWidth="1.5" strokeDasharray="8 4 15 3" />
        <line x1="0" x2={w} y1="33" y2="33" stroke="#35404a" strokeWidth="1" strokeDasharray="6 5" />
        <line x1="0" x2={w} y1="36" y2="36" stroke="#35404a" strokeWidth="1" strokeDasharray="3 9" />
      </>}
      {art === 'apc' && <>
        <line x1="0" x2={w} y1="28" y2="28" stroke="#2f4a4a" strokeWidth="1" strokeDasharray="2 3 1 4" />
        {tabs.map(x => <polygon key={x} points={`${x},39 ${x + 17},39 ${x + 23},51 ${x},51`} fill="#008a78" />)}
        {tabs.map(x => <path key={`l${x}`} d={`M${x + 6} 42h5M${x + 6} 45h5M${x + 6} 48h5`} stroke="#c8f0ea" strokeWidth=".8" />)}
      </>}
      {art === 'pres' && <line x1="0" x2={w} y1="29" y2="29" stroke="#2e4a3a" strokeWidth="1.5" strokeDasharray="1 8" />}
      {art === 'imp' && Array.from({ length: 8 }).map((_, i) => (
        <path key={i} d={`M${i * 37.25} 26h13l4-1h6l5-1h9`} fill="none" stroke="#3b4a3a" strokeWidth="1.2" />
      ))}
      {art === 'baz' && <path d={Array.from({ length: 30 }).map((_, i) => `M${i * 5} ${27 + (i % 3)}h5`).join('')} stroke="#7a8200" strokeWidth=".7" />}
      {art === 'bass' && <line x1="0" x2={w} y1="31" y2="31" stroke="#7a2a45" strokeWidth=".8" strokeDasharray="5 3" />}
    </ClipArt>
  );
};

const laneCurves = {
  3: { c: '#c9c9c9', pts: [[25, 584], [131, 584], [340, 638], [343, 586], [395, 606], [450, 630], [450, 586], [556, 630], [795, 630], [795, 585], [1008, 630], [1033, 585], [1053, 617], [1075, 584], [1090, 584], [1100, 630], [2500, 630]], oy: -188 },
  5: { c: '#c9c9c9', pts: [[25, 968], [131, 968], [172, 924], [185, 968], [225, 924], [238, 968], [278, 924], [291, 968], [330, 924], [344, 968], [688, 968], [728, 924], [741, 968], [781, 924], [795, 968], [835, 924], [848, 968], [888, 924], [901, 968], [941, 924], [954, 968], [994, 924], [1008, 968], [2500, 968]], oy: -292 },
  7: { c: '#54dfe6', pts: [[25, 1265], [1113, 1265], [1538, 1208], [2500, 1208]], oy: -396 },
};
const curvePts = idx => {
  const { pts, oy } = laneCurves[idx];
  return pts.map(([x, y]) => `${(x / 1.4255 - 17.5).toFixed(1)},${(y / 3 + oy).toFixed(1)}`).join(' ');
};

const NOTE_ROW_Y = { as3: -5, gs3: 27, g3: 43, f3: 75, ds3: 107, cs3: 139, c3: 155, ds2: 299 };
const rel = x => x - 528;
const NOTES = [
  ...[[844, 949], [1055, 1160], [1688, 1793], [1899, 2004]].map(a => ['as3', 'A# 3', ...a]),
  ...[[528, 633], [633, 739], [950, 1055], [1161, 1265], [1266, 1371], [1372, 1476], [1477, 1583], [1794, 1898], [2005, 2109], [2110, 2154]].map(a => ['gs3', 'G# 3', ...a]),
  ...[[739, 843], [1055, 1160], [1583, 1687], [1899, 2004]].map(a => ['g3', 'G 3', ...a]),
  ...[[528, 633], [844, 949], [950, 1055], [1161, 1265], [1372, 1476], [1688, 1793], [1794, 1898], [2005, 2109]].map(a => ['f3', 'F 3', ...a]),
  ...[[633, 738], [739, 844], [1056, 1160], [1477, 1581], [1583, 1687], [1898, 2003], [2108, 2154]].map(a => ['ds3', 'D# 3', ...a]),
  ...[[844, 949], [950, 1055], [1688, 1792], [1794, 1898]].map(a => ['cs3', 'C# 3', ...a]),
  ...[[528, 632], [633, 738], [739, 844], [1161, 1266], [1266, 1371], [1372, 1476], [1477, 1583], [1583, 1687], [2005, 2109], [2110, 2154]].map(a => ['c3', 'C 3', ...a]),
  ...[[1056, 1160], [1899, 2003]].map(a => ['ds2', 'D# 2', ...a]),
];
const BLACK_PATTERN = [1, 0, 1, 0, 1, 0, 0, 1, 0, 1, 0, 0];
const ROLL_ROWS = Array.from({ length: 21 }).map((_, i) => BLACK_PATTERN[i % 12]);
const BLACK_TOPS = [-5, 27, 59, 107, 139, 187, 219, 251, 299];
const KEY_LINES = [6, 34, 63, 91, 118, 170, 198, 226, 254, 283];

const BROWSER_TOP = [
  ['Multi Instruments', 'keysbox'], ['External Instruments', 'folderExt'], ['Note FX', 'notefx'], ['Track Presets', 'preset'], ['Favorites', 'star'], ['Recent', 'clock'],
];
const VENDORS = ['ADSR', 'AIR Music Technology', 'Applied Acoustics Systems', 'Arturia', 'Audiomodern', 'AudioThing', 'Braumahbeats.com', 'Cherry Audio', 'CubicAudio', 'Decidedly', 'Digital Suburban', 'East West', 'Evabeat', 'Glitchmachines', 'Image-Line', 'iZotope, Inc.', 'Kilohearts', 'Krotos', 'Kushview', 'KV331 Audio', 'Loopmasters', 'Lunacy Audio', 'MNTRA', 'Modalics'];

/* ---------- parts ---------- */
const TrackHeader = ({ t }) => {
  const hatch = t.kind === 'auto' || t.kind === 'read';
  const disp = t.kind === 'disp';
  const bright = t.a > .9;
  const buttons = (
    <TBtns $bg={t.btn} $h={disp ? 17 : 22} $mt={disp ? 1 : 0}>
      <TBtn $c={t.mute ? '#b92b2b' : undefined} $a={t.mute || bright ? .95 : .65} $fs={disp ? 11 : 12.5}>M</TBtn>
      <TBtn $a={bright ? .95 : .65} $fs={disp ? 11 : 12.5}>S</TBtn>
      {disp ? <TBlank /> : <>
        <TBtn><Dot $c={bright ? '#fff' : 'rgba(255,255,255,.75)'} /></TBtn>
        <TBtn><HalfDot $c={bright ? '#fff' : 'rgba(255,255,255,.75)'} /></TBtn>
      </>}
    </TBtns>
  );
  return (
    <TrackRow $bg={t.bg}>
      <TStrip $c={t.strip} $hatch={hatch}>
        {!hatch && <TStripSub><Ico n="wave" s={9} /></TStripSub>}
      </TStrip>
      <TBody>
        {(t.kind === 'inst' || disp) && <>
          <TLine $h={disp ? 22 : 26}>
            <TNum $lh={disp ? 19 : 22}>{t.n}</TNum>
            {buttons}
            <TName $a={t.a} $lh={disp ? 19 : 24}>{t.name}</TName>
            <TKeys $a={t.a}><Ico n="keys" s={18} /></TKeys>
          </TLine>
          {t.kind === 'inst' && !t.noSl && (
            <TSlider>
              <TFill $c={t.slc} style={{ width: `${t.sl}%` }} />
            </TSlider>
          )}
          {disp && (
            <SubLine>
              <PowerCol $c="rgba(255,255,255,.3)"><Power size={13} strokeWidth={2.5} /></PowerCol>
              <DispBlank />
              <DispDrop>Display: Off</DispDrop>
            </SubLine>
          )}
        </>}
        {t.kind === 'auto' && <>
          <TLine>
            <PowerCol $c="rgba(255,255,255,.22)" $pt={1}><Power size={13} strokeWidth={2.5} /></PowerCol>
            <AutoVal />
            <AutoSw $dim />
            <AutoName>{t.name}</AutoName>
          </TLine>
          <TSlider />
        </>}
        {t.kind === 'read' && <>
          <TLine $h={17}>
            <PowerCol $c="#2e96e8" $pt={1}><Power size={13} strokeWidth={2.5} /></PowerCol>
            <AutoVal $read>Read</AutoVal>
            <AutoSw />
            <AutoName>{t.name}</AutoName>
            <AutoSide>{t.side}</AutoSide>
          </TLine>
          <SubLine>
            <TSlider $mt={0}>
              <TFill $l={t.mid ? 37 : 0} style={{ width: `${t.mid ? 13 : t.sl}%` }} />
            </TSlider>
            <AutoSide $ml={10}>{t.side2}</AutoSide>
          </SubLine>
        </>}
      </TBody>
      {!hatch && <TSliver>{t.orange && <Orange />}{t.orangeTop && <Orange />}</TSliver>}
    </TrackRow>
  );
};

const Clip = ({ c, part }) => {
  const w = part.to - part.from;
  const n = Math.ceil(w / 37.25);
  return (
    <ClipBox $body={c.b} style={{ left: part.from, width: w }}>
      <ClipHead $c={c.h}>
        {Array.from({ length: n }).map((_, i) => <ClipSeg key={i}>{c.label}</ClipSeg>)}
      </ClipHead>
      <ClipGraphic art={c.art} w={w} />
    </ClipBox>
  );
};

const LaneRow = ({ t, i }) => (
  <Lane $bg={t.lane}>
    {CLIPS[i] && CLIPS[i].parts.map(p => <Clip key={p.from} c={CLIPS[i]} part={p} />)}
    {laneCurves[i] && (
      <ClipArt width="1680" height="52">
        <polyline points={curvePts(i)} fill="none" stroke={laneCurves[i].c} strokeWidth="1.5" />
      </ClipArt>
    )}
    {i === 12 && (
      <ClipArt width="1680" height="52">
        <polyline points="0,31 389,31 389,21 542,21 542,31 1680,31" fill="none" stroke="#54dfe6" strokeWidth="1.5" />
      </ClipArt>
    )}
    {i === 0 && (
      <ClipArt width="1680" height="52">
        <polygon points="465,39 482,39 488,51 465,51" fill="#063a8b" />
        <polygon points="540,39 557,39 563,51 540,51" fill="#063a8b" />
        <rect x="472" y="42" width="4" height="6" fill="#dfe8f5" />
        <rect x="547" y="42" width="4" height="6" fill="#dfe8f5" />
      </ClipArt>
    )}
  </Lane>
);

const ArrRuler = () => (
  <RulerWrap>
    <RulerTop />
    <RulerRow $step={37.25} $th={7}>
      {Array.from({ length: 24 }).map((_, i) => <RCell key={i} $w={74.5}>{1 + i * 8}</RCell>)}
    </RulerRow>
    <LoopMark />
  </RulerWrap>
);

const EditorRuler = () => {
  const labels = [];
  for (let b = 1; b <= 8; b++) for (let s = 1; s <= 4; s++) if (!(b === 8 && s === 4)) labels.push(s === 1 ? `${b}` : `${b}.${s}`);
  return (
    <RulerWrap>
      <EdRulerTop />
      <RulerRow $step={13.1875} $th={3}>
        {labels.map(l => <RCell key={l} $w={52.75} $fs={l.includes('.') ? 10 : 11.5}>{l}</RCell>)}
      </RulerRow>
      <Cursor $x={1450} />
    </RulerWrap>
  );
};

const Thumb1 = () => (
  <Thumb width="119" height="70" viewBox="0 0 119 70">
    <rect width="119" height="70" fill="#d4d8da" />
    <rect width="119" height="10" fill="#f5f5f5" />
    <rect x="17" y="3" width="70" height="5" fill="#a9aeb2" />
    <rect x="1" y="13" width="14" height="42" fill="#55606a" />
    <rect x="17" y="13" width="100" height="42" fill="#414a54" />
    <rect x="46" y="47" width="69" height="2" fill="#e88a1c" />
    {Array.from({ length: 12 }).map((_, i) => <rect key={i} x="47" y={16 + i * 2.5} width="65" height="1" fill="#7c858e" />)}
    {Array.from({ length: 8 }).map((_, i) => <rect key={i} x="20" y={18 + i * 3} width="20" height="1" fill="#8d959c" />)}
    <rect y="56" width="119" height="14" fill="#d8d8d8" />
    {Array.from({ length: 34 }).map((_, i) => <rect key={i} x={18 + i * 3} y="57" width="1.6" height="8" fill="#222" />)}
  </Thumb>
);
const Thumb2 = () => (
  <Thumb width="128" height="80" viewBox="0 0 128 80">
    <rect width="128" height="80" fill="#191a1c" />
    <rect width="128" height="6" fill="#2e3033" />
    {[6, 12].map(y => <rect key={y} x="3" y={15 + y - 6} width="118" height="2" fill="#3a3c3f" />)}
    {[['#d2379a', '#f0913a'], ['#b9a36a', '#e5e0c5'], ['#1e6d75', '#a5d0d2'], ['#222', '#ccc'], ['#e6482e', '#a019a0']].map((c, i) => (
      <g key={i}>
        <rect x={3 + i * 25} y="27" width="22" height="10" fill={c[0]} />
        <rect x={8 + i * 25} y="29" width="11" height="5" fill={c[1]} />
        <rect x={3 + i * 25} y="37" width="22" height="3" fill="#2a2b2e" />
      </g>
    ))}
    <rect x="3" y="44" width="22" height="14" fill="#222326" />
  </Thumb>
);
const Thumb3 = () => (
  <Thumb $mt={3} width="120" height="85" viewBox="0 0 120 85">
    <rect width="120" height="85" fill="#8f9aa1" />
    <rect width="120" height="7" fill="#3d4750" />
    {[9, 24, 39, 54].map(y => [1, 41].map(x => (
      <g key={`${x}${y}`}>
        <rect x={x} y={y} width={y > 30 && x > 2 ? 78 : 36} height="13" fill="#2a3142" />
        {[8, 17, 26, 35].map(k => k < 35 && <circle key={k} cx={x + k} cy={y + 7} r="2.4" fill="#e4e6e8" />)}
      </g>
    )))}
    <rect x="40" y="41" width="40" height="2" fill="#2a85c0" />
    <rect x="80" y="41" width="39" height="2" fill="#2fbf5c" />
    <rect x="1" y="71" width="116" height="13" fill="#3a4352" />
    {[10, 22, 45, 60, 74, 88, 100].map(k => <circle key={k} cx={k} cy="77" r="2.4" fill="#e4e6e8" />)}
  </Thumb>
);

const FMini = () => <Ico n="keys" s={16} c="#d6d8db" />;
const FolderI = ({ n = 'folder', c = '#dfe2e5' }) => <Ico n={n} s={16} c={c} />;

export default function App() {
  return (
    <Page>
      <Global />
      <TitleBar>
        <AppIcon />
        Studio One - p02*
        <Grow />
        <WinCtl><Minus size={11} /></WinCtl>
        <WinCtl><Ico n="doc" s={12} /></WinCtl>
        <WinCtl><X size={13} strokeWidth={1.2} /></WinCtl>
      </TitleBar>
      <MenuBar>
        {['File', 'Edit', 'Song', 'Track', 'Event', 'Audio', 'Transport', 'View', 'Studio One', 'Help'].map(m => <span key={m}>{m}</span>)}
      </MenuBar>
      <TopBar>
        <ParamPanel>
          <ParamCol $w={172} $pl={46}>Parameter<WhiteTri /></ParamCol>
          <ParamCol $w={198} $pl={27}>Control<WhiteTri /></ParamCol>
        </ParamPanel>
        <Group $ml={248}>
          <Tool $w={30} $on $pr={12}><Ico n="bracket" /></Tool>
          <Tool $w={30} $on><Ico n="arrow" /></Tool>
          <Tool $w={31} $on><Ico n="range" /></Tool>
          <Tool><Ico n="knife" /></Tool>
          <Tool><Ico n="eraser" /></Tool>
          <Tool><Ico n="paint" /></Tool>
          <Tool><Ico n="mute" /></Tool>
          <Tool><Ico n="split" /></Tool>
          <Tool><Ico n="speaker" /></Tool>
        </Group>
        <Group $ml={16}>
          <Tool $w={32}><Ico n="stretch" /></Tool>
          <Tool $w={32}><Ico n="lr" /></Tool>
          <Tool $w={32}><Ico n="q" /></Tool>
          <Tool $w={32}><Ico n="press" /></Tool>
        </Group>
        <Group $ml={15}>
          <Tool $w={32} $on $fs={11}>IQ</Tool>
          <LabelBlock $w={80}>Quantize<span>1/8</span><SmallDrop $r={14} /></LabelBlock>
          <LabelBlock $w={82}>Timebase<span>Bars</span><SmallDrop $r={14} /></LabelBlock>
          <LabelBlock $w={88}>Snap<span>Adaptive</span><SmallDrop /></LabelBlock>
          <Tool $w={35} $on><Ico n="snapflag" /></Tool>
        </Group>
        <Group $ml={16}>
          <Tool><Ico n="filmL" /></Tool>
          <Tool $on><Ico n="arrowR" /></Tool>
          <Tool><Ico n="splitV" /></Tool>
        </Group>
        <Group $ml={10}><Tool><Ico n="expand" /></Tool></Group>
        <Group $ml={10}><Tool $fs={15}>?</Tool></Group>
        <Group $ml={11}><Tool><Ico n="film" /></Tool></Group>
        <Group $ml={10}><Tool $w={47}><Ico n="grid" /><DropGray /></Tool></Group>
        <RightIcons>
          <RightIcon><User size={26} strokeWidth={1.6} /></RightIcon>
          <RightIcon><Ico n="circArrows" s={26} /></RightIcon>
          <RightIcon><Ico n="homeO" s={26} /></RightIcon>
          <RightIcon $dim><Ico n="doc" s={26} /></RightIcon>
        </RightIcons>
      </TopBar>

      <Main>
        <LeftCol>
          <InspHead>
            <Ico n="list" s={18} />
            <Svg viewBox="0 0 6 18" width="6" height="18"><path d="M1.500 1h3v3h-3z M1.500 6h3v11h-3z" fill="#e8eaec" /></Svg>
          </InspHead>
          <NameBar $h={27} $mb={1}>
            <CyanChip />
            <NumChip>6</NumChip>
            <span style={{ marginLeft: 6 }}>progression</span>
            <Grow />
            <Ico n="keys" s={20} c="#f2f4f6" />
            <span style={{ width: 5 }} />
          </NameBar>
          <IRow><ILabel>Timebase</ILabel><Field $drop>Beats</Field></IRow>
          <IRow><ILabel>Group</ILabel><Field $drop>None</Field></IRow>
          <IRow><ILabel>Layers</ILabel><Field $drop $fs={11}>progression 1&nbsp;&nbsp;</Field></IRow>
          <IRow><ILabel>Layers follow events</ILabel><CheckBox><Check size={14} strokeWidth={2.5} /></CheckBox></IRow>
          <IRow><ILabel>Follow chords</ILabel><Field $drop>Off</Field></IRow>
          <IRow><ILabel>Delay</ILabel><Field>0.00 ms</Field></IRow>
          <IRow><ILabel>Transpose</ILabel><Field>0</Field></IRow>
          <IRow><ILabel>Velocity</ILabel><Field>0%</Field></IRow>
          <IRow><ILabel>Retrospective Recording</ILabel><RotateCcw size={15} color="#c5c9cd" strokeWidth={3} style={{ marginRight: 2 }} /></IRow>
          <IRow><ILabel>Automation</ILabel><Field $bg="#4b5058" $bd="#3a3e45" $fs={11}>Auto: Off</Field></IRow>
          <IRow>
            <PowerWrap $ml={1}><Power size={14} strokeWidth={3} /></PowerWrap>
            <ILabel>Parameter</ILabel>
            <Swatch />
            <Field $w={93} $drop>_Contrl3</Field>
          </IRow>
          <IRow $pad="0 5px 0 5px"><Field $w={190} $left><Ico n="edit" s={16} c="#e3e6e9" /></Field></IRow>
          <NoteFX>
            <NoteFXHead>
              <PowerWrap $c="#6f747b" $mr={0}><Power size={12} strokeWidth={2.5} /></PowerWrap>
              <span>Note FX</span>
              <Grow />
              <Plus size={13} strokeWidth={3} color="#f2f2f2" />
            </NoteFXHead>
          </NoteFX>
          <Grow />
          <Handle />
          <CyanLine $mt={1} />
          <IRow $pad="0 3px 0 3px" $mt={1}>
            <ILabel>Out</ILabel>
            <Field $w={65} $left $drop>FM8</Field>
            <Field $w={62} $left $drop style={{ marginLeft: 6 }}>Eveut 1</Field>
          </IRow>
          <IRow $pad="0 3px 0 3px">
            <ILabel>In</ILabel>
            <Field $w={133} $left $drop>None</Field>
          </IRow>
          <IRow $pad="0 3px 0 3px">
            <ILabel>Channel</ILabel>
            <Field $w={133} $left $drop>FM8</Field>
          </IRow>
          <CyanLine />
          <Strip>
            <MixCol>
              <PanBox />
              <PanLabel><MiniTri />&lt;C&gt;</PanLabel>
              <MSGrid>
                <MSCell>M</MSCell>
                <MSCell>S</MSCell>
                <MSCell><Dot /></MSCell>
                <MSCell><HalfDot /></MSCell>
              </MSGrid>
              <DbLabel>0dB</DbLabel>
              <FaderArea>
                <Scale>
                  {[['10', 10], ['6', 17], ['0', 29], ['-6', 42], ['-12', 52], ['-24', 64], ['-36', 77], ['-48', 86]].map(([l, y]) => <ScaleTick key={l} $y={y}>{l}</ScaleTick>)}
                </Scale>
                <Meter>
                  <MeterBar />
                  <MeterBar />
                </Meter>
                <FaderTrack><FaderLine /></FaderTrack>
                <FaderCap />
                <SquareBtn />
                <RoundBtn />
              </FaderArea>
              <FlatBox />
              <SRow>6<Ico n="keys" s={18} /></SRow>
              <NoneBox>None<AutoDim>Auto: Off</AutoDim></NoneBox>
            </MixCol>
            <FxCol>
              <FxHead>
                <PowerWrap $c="#8a8f96" $mr={0}><Power size={12} strokeWidth={2.5} /></PowerWrap>
                Inserts<Grow /><DropGray /><Plus size={11} strokeWidth={3} color="#8f959b" />
              </FxHead>
              <FxBody $h={185} />
              <FxHead $t>
                <PowerWrap $c="#8a8f96" $mr={0}><Power size={12} strokeWidth={2.5} /></PowerWrap>
                Sends<Grow /><DropGray /><Plus size={11} strokeWidth={3} color="#8f959b" />
              </FxHead>
            </FxCol>
            <FmBar>FM8</FmBar>
          </Strip>
          <Handle $h={8} />
          <NameBar $h={27}>
            <CyanChip />
            <span style={{ marginLeft: 7 }}>progression</span>
          </NameBar>
          <EventPanel>
            <ScrollThin />
            <IRow $pad="0 11px 0 7px"><ILabel>Start</ILabel><Field>00071 .01.01.00</Field></IRow>
            <IRow $pad="0 11px 0 7px"><ILabel>End</ILabel><Field>00075 .01.01.00</Field></IRow>
            <IRow $pad="0 11px 0 7px"><ILabel>Sync Point</ILabel><Field $c="#777c83">00071 .01.01.00</Field></IRow>
            <IRow $pad="0 11px 0 7px"><ILabel>Transpose</ILabel><Field>0</Field></IRow>
            <IRow $pad="0 11px 0 7px"><ILabel>Velocity</ILabel><Field>0%</Field></IRow>
            <IRow $pad="0 11px 0 7px"><ILabel>Time Lock</ILabel><CheckBox /></IRow>
          </EventPanel>
        </LeftCol>

        <CenterCol>
          <Arrange>
            <ArrInner>
              <ArrHead>
                <ListHead>
                  <Wrench size={17} strokeWidth={2.5} />
                  <Ico n="curve" s={24} c="#e0e3e6" />
                  <Grow />
                  <Ico n="rows" s={17} c="#dfe2e5" />
                  <Plus size={17} strokeWidth={3.5} color="#d0d3d7" />
                </ListHead>
                <ArrRuler />
              </ArrHead>
              <ArrBody>
                <TrackList>
                  {TRACKS.map(t => <TrackHeader key={t.name + t.strip} t={t} />)}
                </TrackList>
                <Lanes>
                  {TRACKS.map((t, i) => <LaneRow key={t.name + t.strip} t={t} i={i} />)}
                  <PlayBand />
                  <Cursor $x={64} />
                </Lanes>
                <VScroll>
                  <UpTri />
                  <VThumb $h={498} />
                  <DownTri />
                </VScroll>
              </ArrBody>
              <ArrFoot>
                <FootCell $w={48}>M</FootCell>
                <FootCell $w={49}>S</FootCell>
                <FootCell $w={48} $c="#2e96e8"><Power size={13} strokeWidth={3} /></FootCell>
                <FootCell $w={115} $bg="#4b5059" $pr={35}>Small<SmallDrop $r={26} $b={4} /></FootCell>
                <LeftTri $ml={6} />
                <Zoomer>
                  <Ico n="split" s={10} />
                  <ZoomBar />
                </Zoomer>
              </ArrFoot>
            </ArrInner>
          </Arrange>

          <Editor>
            <EdTool>
              <Group>
                <Tool $on><Ico n="ruler" s={15} /></Tool>
                <Tool><Ico n="drum" /></Tool>
                <Tool><Ico n="treble" s={20} /></Tool>
              </Group>
              <Group $ml={55}>
                <Tool><Ico n="arrow" /></Tool>
                <Tool><Ico n="knife" /></Tool>
                <Tool $on><Ico n="pencil" /><Corner /></Tool>
                <Tool><Ico n="eraser" /></Tool>
                <Tool><Ico n="mute" /></Tool>
                <Tool><Ico n="speaker" /></Tool>
              </Group>
              <Group $ml={35}>
                <Tool><Ico n="skew" /></Tool>
                <Tool $on><Ico n="q" /></Tool>
                <Tool $w={37}><Ico n="press" /></Tool>
                <Tool $w={70} $fs={11}>Action<DropGray /></Tool>
              </Group>
              <Group $ml={10}>
                <LabelBlock $w={103}>Note Color<span>Part</span><SmallDrop $r={14} /></LabelBlock>
                <Tool $w={38}><Ico n="bars2" /></Tool>
                <Tool $w={38} $fs={10}>AQ</Tool>
                <LabelBlock $w={84}>Quantize<span>1/32</span><SmallDrop $r={10} /></LabelBlock>
                <LabelBlock $w={84}>Timebase<span>Bars</span><SmallDrop $r={10} /></LabelBlock>
                <LabelBlock $w={90}>Snap<span>Bar</span><SmallDrop $r={10} /></LabelBlock>
                <Tool $w={35} $on><Ico n="snapflag" /></Tool>
              </Group>
              <Group $ml={12}>
                <Tool $w={35} $on><Ico n="arrowR" /></Tool>
                <Tool $w={36}><Ico n="divide" /></Tool>
              </Group>
              <Group $ml={10}><Tool><Ico n="expand" /></Tool></Group>
              <WinBtns $t={7}><ArrowUpRight size={14} strokeWidth={2.5} /><X size={15} strokeWidth={2} /></WinBtns>
            </EdTool>
            <EdRow2>
              <Seg $w={81} $cols="1fr">
                <SegCell $on>Grid</SegCell>
                <SegCell>Groove</SegCell>
              </Seg>
              <NoteSeg>
                {[0, 1, 2, 3, 4, 5, 6].map(k => <NoteBtn key={k} $on={k === 5}><NoteGlyph kind={k} /></NoteBtn>)}
              </NoteSeg>
              <Seg $w={259} $ml={10} $cols="1fr 1fr 1fr 1fr">
                <SegCell $on>Straight</SegCell>
                <SegCell>Triplet</SegCell>
                <SegCell>Quintuplet</SegCell>
                <SegCell>Septuplet</SegCell>
                <SegCell $span={4} $sb>Swing<span>0%</span></SegCell>
              </Seg>
              <Seg $w={261} $ml={12} $cols="1fr 1fr">
                <SegCell $sb $under>Start<span>100%</span></SegCell>
                <SegCell $sb>Velocity<PctDim $dim>0%</PctDim></SegCell>
                <SegCell $sb>End<span>0%</span></SegCell>
                <SegCell $sb $under>Range<span>100%</span></SegCell>
              </Seg>
              <Seg $w={164} $ml={10} $cols="repeat(5,1fr)">
                <SegCell $on>A</SegCell>
                <SegCell>B</SegCell>
                <SegCell>C</SegCell>
                <SegCell>D</SegCell>
                <SegCell>E</SegCell>
                <SegCell>+</SegCell>
                <SegCell $span={4}>1/32*<SmallDrop $r={5} $b={8} /></SegCell>
              </Seg>
              <Seg $w={80} $ml={10} $cols="1fr 1fr">
                <SegCell $on><Ico n="sizeE" s={14} /></SegCell>
                <SegCell><Ico n="size2" s={16} /></SegCell>
                <SegCell $span={2}>Apply</SegCell>
              </Seg>
              <WinBtns $t={5}><ArrowUpRight size={14} strokeWidth={2.5} /><X size={15} strokeWidth={2} /></WinBtns>
            </EdRow2>
            <EdHeadRow>
              <EdHeadLeft>
                <Ico n="list" s={17} c="#dfe2e5" />
                <CyanChip $w={13} $ml={8} />
                <EdName>progression</EdName>
                <DropGray />
                <Grow />
                <Ico n="rows" s={16} c="#dfe2e5" />
                <span style={{ width: 6 }} />
              </EdHeadLeft>
              <EditorRuler />
            </EdHeadRow>
            <EdBody>
              <EdLeft>
                <IRow $pad="0 5px 0 7px" $h={24}>
                  <Ico n="keys" s={13} c="#e2e6ea" />
                  <ILabel style={{ marginLeft: 7 }}>Instrument</ILabel>
                  <MSBox><MSBoxCell>M</MSBoxCell><MSBoxCell>S</MSBoxCell></MSBox>
                </IRow>
                <IRow $pad="0 3px 0 5px"><ILabel>Audition Notes</ILabel><CheckBox><Check size={13} strokeWidth={2.5} /></CheckBox></IRow>
                <IRow $pad="0 3px 0 5px"><ILabel>Default Velocity</ILabel><Field $w={40}>80%</Field></IRow>
                <IRow $pad="0 3px 0 5px"><ILabel>Scale</ILabel><ScaleArt /><CheckBox /></IRow>
                <IRow $pad="0 3px 0 3px" $gap={8}>
                  <Field $w={44} $drop>C&nbsp;&nbsp;&nbsp;</Field>
                  <Field $w={162} $drop>Chromatic</Field>
                </IRow>
                <IRow $pad="0 3px 0 5px"><ILabel>Length</ILabel><CheckBox $bg="#2f80dc" $bd="#2f80dc"><Ico n="q" s={13} /></CheckBox></IRow>
                <IRow $pad="0 3px 0 3px" $gap={8}>
                  <Field $w={44} $drop>1/32&nbsp;&nbsp;</Field>
                  <Field $w={138} $drop>Straight</Field>
                  <CheckBox style={{ marginLeft: -3 }} $bg="#4a5563"><Dot $s={3} /></CheckBox>
                </IRow>
                <IRow $pad="0 3px 0 5px"><ILabel>Sound Variations</ILabel><CheckBox $bg="#4a5563"><Wrench size={11} /></CheckBox></IRow>
                <IRow $pad="0 3px 0 5px" $mt={13}><ILabel>No event selected</ILabel></IRow>
                <IRow $pad="0 3px 0 5px" $h={25}><ILabel>Input Chord</ILabel><FlatField /></IRow>
                <IRow $pad="0 3px 0 5px" $h={27}><ILabel>Current Chord</ILabel><FlatField>E♭</FlatField></IRow>
              </EdLeft>
              <EdRight>
                <RollRow>
                  <Piano>
                    {KEY_LINES.map(y => <KeyLine key={y} style={{ top: y }} />)}
                    {BLACK_TOPS.map(y => <BlackKey key={y} style={{ top: y }} />)}
                    <C3Label>C 3</C3Label>
                  </Piano>
                  <Roll>
                    <RollTopShift>
                      {ROLL_ROWS.map((b, i) => <RollRowBg key={i} $b={b} />)}
                    </RollTopShift>
                    <RollGrid />
                    <BarLine />
                    {NOTES.map(([row, label, a, b]) => (
                      <NoteBox key={`${row}${a}`} style={{ left: rel(a), width: b - a, top: NOTE_ROW_Y[row] }}>{label}</NoteBox>
                    ))}
                    <Cursor $x={1450} />
                  </Roll>
                  <EdVScroll>
                    <UpTri />
                    <VThumb $h={42} $mt={190} />
                    <DownTri />
                  </EdVScroll>
                </RollRow>
                <EdFoot>
                  <FootIcons>
                    <Ico n="wave" s={14} />
                    <Plus size={12} strokeWidth={3} />
                    <Minus size={12} strokeWidth={3} />
                  </FootIcons>
                  <LeftTri $ml={5} />
                  <HThumb $w={63} $ml={6} />
                  <Zoomer>
                    <Ico n="split" s={10} />
                    <ZoomBar />
                  </Zoomer>
                </EdFoot>
              </EdRight>
            </EdBody>
          </Editor>
        </CenterCol>

        <RightCol>
          <BrTabs>
            <BrHome><House size={14} fill="#c3c7cb" /></BrHome>
            <BrTab $on>Instruments</BrTab>
            <BrTab>Effects</BrTab>
            <BrTab>Loops</BrTab>
            <BrTab>Files</BrTab>
            <BrTab>Cloud</BrTab>
            <BrTab>Shop</BrTab>
            <BrTab>Pool</BrTab>
            <Grow />
            <BrHome><Search size={15} strokeWidth={2.5} color="#e4e6e9" /></BrHome>
          </BrTabs>
          <BrSort>
            Sort by:
            <SortItem $ml={18}>Flat</SortItem>
            <SortItem>Folder</SortItem>
            <SortItem $on>Vendor</SortItem>
            <SortItem>Type</SortItem>
            <SortIcons>
              <Wrench size={12} color="#c5c9cd" />
              <Ico n="windowI" s={13} />
              <Ico n="rows" s={14} />
            </SortIcons>
          </BrSort>
          <BrTag>
            <TagInput>Tag Search</TagInput>
            <TagDiamond />
            <TagIcon><X size={9} strokeWidth={4} /></TagIcon>
          </BrTag>
          <BrCrumb>Instruments <ChevronRight size={12} color="#4a9be0" /></BrCrumb>
          <BrListWrap>
            <BrList>
              {BROWSER_TOP.map(([name, ic], i) => (
                <BrRow key={name} $sep={i === 5}>
                  <RTri />
                  <IconSlot>
                    {ic === 'keysbox' && <Ico n="keys" s={16} c="#c0c3c6" />}
                    {ic === 'folderExt' && <FolderI c="#b8bbbe" />}
                    {ic === 'notefx' && <FolderI c="#5a9cc0" />}
                    {ic === 'preset' && <Ico n="grid" s={15} c="#b8bbbe" />}
                    {ic === 'star' && <Star size={15} />}
                    {ic === 'clock' && <Clock size={15} />}
                  </IconSlot>
                  {name}
                </BrRow>
              ))}
              {VENDORS.map(v => (
                <BrRow key={v}>
                  <RTri />
                  <IconSlot><FolderI /></IconSlot>
                  {v}
                </BrRow>
              ))}
              <BrRow>
                <DTri />
                <IconSlot><FolderI n="folderO" c="#c9ccd0" /></IconSlot>
                Native Instruments
              </BrRow>
              <BrRow2><FMini />FM8</BrRow2>
              <Thumb1 />
              <BrRow2 style={{ marginTop: 6 }}><FMini />Kontakt 7</BrRow2>
              <Thumb2 />
              <BrRow2 style={{ marginTop: 6 }}><FMini />Massive</BrRow2>
              <Thumb3 />
            </BrList>
            <BrScroll>
              <UpTri />
              <VThumb $h={404} />
              <DownTri $mb={5} />
            </BrScroll>
          </BrListWrap>
          <BrFoot>
            <Ico n="folder" s={33} c="#d8dcdf" />
            <div>
              <FootTitle>Instruments</FootTitle>
              <FootSub>Instruments</FootSub>
            </div>
          </BrFoot>
        </RightCol>
      </Main>

      <Bottom>
        <Transport>
          <TC $w={30} $ml={13} $pt={2}><Ico n="midi" s={17} c="#808388" /><TLabel>MIDI</TLabel></TC>
          <TC $w={66} $ml={10} $pt={8}><PerfBar $w={5} /><PerfBar $mt={3} /><TLabel style={{ marginTop: 2 }}>Performance</TLabel></TC>
          <TC $w={30} $ml={12} $pt={4}>
            <Spinner width="24" height="24" viewBox="0 0 24 24"><circle cx="12" cy="12" r="10" fill="none" stroke="#c6ccd2" strokeWidth="2" strokeDasharray="2 3.500" /></Spinner>
          </TC>
          <TC $w={56} $ml={11} $al="flex-start">48.0 kHz<span>4.2 ms</span></TC>
          <TC $w={70} $ml={9}>12:09 days<TLabel>Record Max</TLabel></TC>
          <TC $w={88} $ml={19}>00:00:13.199<TLabel>Seconds <DropGray /></TLabel></TC>
          <TC $w={150} $ml={16} $pt={7}><BigTime>00007.04.02.99</BigTime><TLabel>Bars <DropGray /></TLabel></TC>
          <PlayCtl $w={30} $ml={2}><LeftTri /></PlayCtl>
          <PlayCtl $w={28}><Svg viewBox="0 0 20 20" width="18" height="18"><path d="M10 3L2 10l8 7zM18 3l-8 7 8 7z" fill="currentColor" /></Svg></PlayCtl>
          <PlayCtl $w={26}><Svg viewBox="0 0 20 20" width="18" height="18"><path d="M2 3l8 7-8 7zM10 3l8 7-8 7z" fill="currentColor" /></Svg></PlayCtl>
          <PlayCtl $w={22}><Svg viewBox="0 0 20 20" width="13" height="16"><path d="M4 3l12 7-12 7z" fill="currentColor" /></Svg></PlayCtl>
          <PlayCtl $w={30}><Svg viewBox="0 0 20 20" width="15" height="18"><path d="M3 3h2v14H3zM17 3L6 10l11 7z" fill="currentColor" /></Svg></PlayCtl>
          <PlayCtl $w={40}><StopSq /></PlayCtl>
          <PlayCtl $w={36}><Svg viewBox="0 0 20 24" width="20" height="24"><path d="M2 1l17 11L2 23z" fill="#74e02b" /></Svg></PlayCtl>
          <PlayCtl $w={30}><RecDot /></PlayCtl>
          <PlayCtl $w={54}><Svg viewBox="0 0 30 24" width="30" height="24"><path d="M9 3h12a8 8 0 0 1 0 18h-1 M10 21H9A8 8 0 0 1 9 3 M15 10v14" fill="none" stroke="#4aa3dc" strokeWidth="2" /></Svg></PlayCtl>
          <LR $ml={4}>L<br />R</LR>
          <TC $w={82} $ml={19} $pt={3}>00071.01.01.00<span>00075.01.01.00</span></TC>
          <TC $w={30} $ml={25}>Off<TLabel>Sync</TLabel></TC>
          <TC $w={24} $ml={8} $pt={2}><Ico n="wave" s={14} c="#9aa0a6" /><Ico n="split" s={13} c="#9aa0a6" /></TC>
          <TC $w={26} $pt={2}><Ico n="split" s={14} c="#9aa0a6" /><Ico n="grid" s={11} c="#9aa0a6" /></TC>
          <TC $w={66} $ml={2} $pt={2}>
            <SubLine style={{ gap: 4, height: 15 }}><Dot $c="#4aa3dc" $s={10} /><Wrench size={11} color="#9aa0a6" /><Ico n="metro" s={12} c="#9aa0a6" /></SubLine>
            <TLabel>Metronome</TLabel>
          </TC>
          <TC $w={40} $ml={10}>4 / 4<TLabel>Timing</TLabel></TC>
          <TC $w={32} $ml={8}>.<TLabel>Key</TLabel></TC>
          <TC $w={50} $ml={6}>125.00<TLabel>Tempo</TLabel></TC>
          <LevelWrap $ml={11}>
            <LevelTop>
              <LevelBars><LevelBar /><LevelBar /></LevelBars>
              <LevelRed />
            </LevelTop>
            <LevelBottom><LevelHatch /><Dot $c="#4ba9da" $s={8} /></LevelBottom>
          </LevelWrap>
        </Transport>
        <ViewBtn $w={55} $ml={470}>Edit</ViewBtn>
        <ViewBtn $w={56}>Mix</ViewBtn>
        <ViewBtn $w={64}>Browse</ViewBtn>
      </Bottom>
    </Page>
  );
}
